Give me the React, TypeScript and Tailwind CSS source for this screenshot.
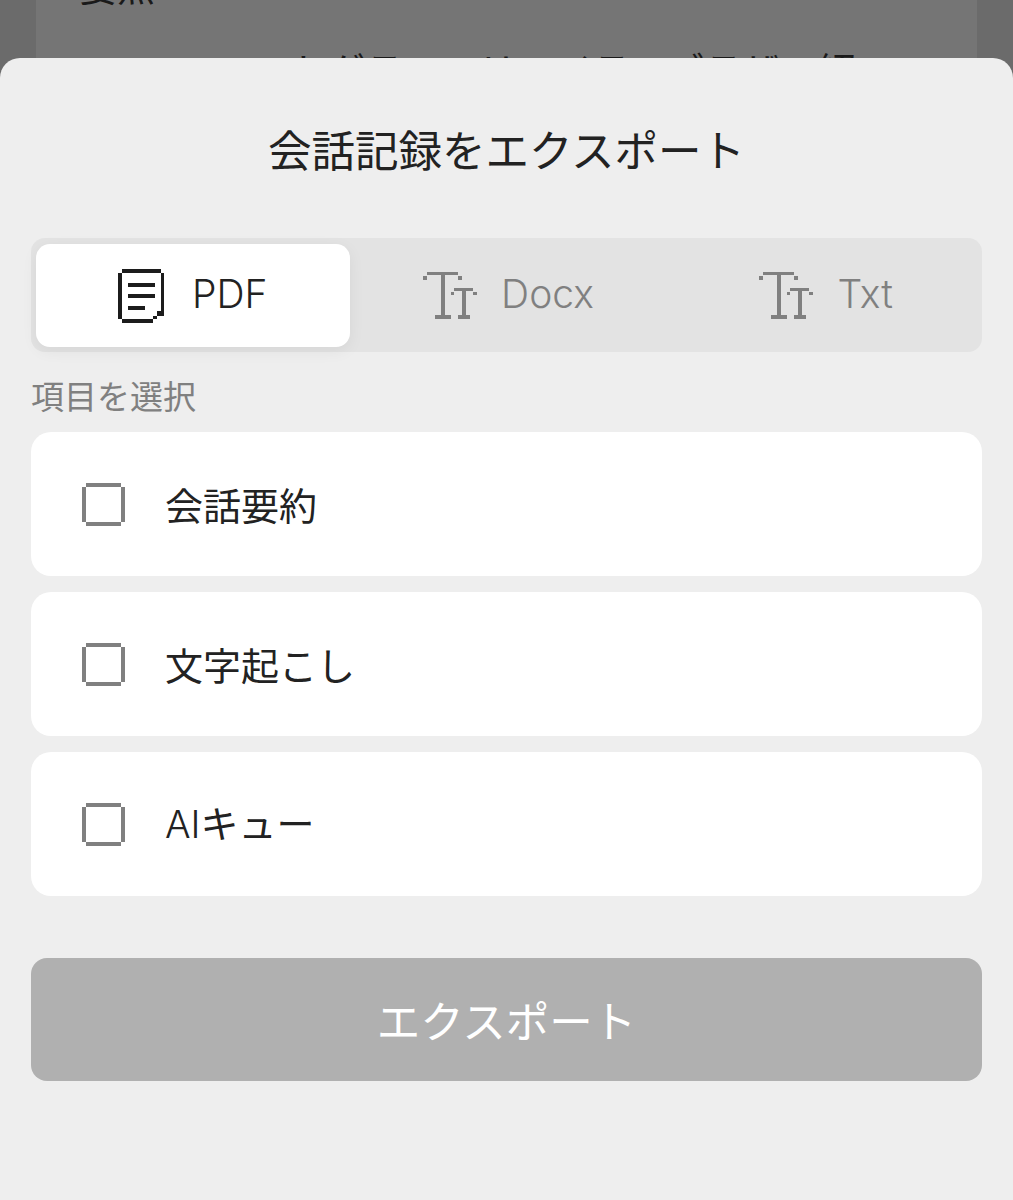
const FONT = "font-['Inter','Noto_Sans_CJK_JP',sans-serif]";

const DocIcon = () => (
  <svg width="46" height="54" viewBox="0 0 46 54" fill="#1c1c1c" shapeRendering="crispEdges" className="shrink-0">
    <rect x="4" y="0" width="39" height="4" />
    <rect x="0" y="4" width="4" height="46" />
    <rect x="43" y="4" width="3" height="38" />
    <rect x="4" y="50" width="31" height="4" />
    <rect x="35" y="47" width="4" height="3" />
    <rect x="39" y="42" width="7" height="5" />
    <rect x="10" y="14" width="27" height="4" />
    <rect x="10" y="25" width="27" height="4" />
    <rect x="10" y="37" width="17" height="4" />
  </svg>
);

const TextIcon = () => (
  <svg width="54" height="47" viewBox="0 0 54 47" fill="#808080" shapeRendering="crispEdges" className="shrink-0">
    <rect x="4" y="0" width="31" height="3" />
    <rect x="0" y="4" width="4" height="4" />
    <rect x="35" y="4" width="4" height="4" />
    <rect x="18" y="3" width="4" height="40" />
    <rect x="12" y="43" width="16" height="4" />
    <rect x="31" y="16" width="19" height="3" />
    <rect x="28" y="20" width="3" height="3" />
    <rect x="50" y="20" width="4" height="3" />
    <rect x="39" y="19" width="4" height="24" />
    <rect x="35" y="43" width="12" height="4" />
  </svg>
);

const CheckBox = () => (
  <svg width="43" height="43" viewBox="0 0 43 43" fill="#808080" shapeRendering="crispEdges" className="shrink-0">
    <rect x="4" y="0" width="35" height="4" />
    <rect x="0" y="4" width="4" height="35" />
    <rect x="39" y="4" width="4" height="35" />
    <rect x="4" y="39" width="35" height="4" />
  </svg>
);

export default function App() {
  return (
    <div className={`${FONT} w-[1013px] h-[1200px] overflow-hidden bg-[#6b6b6b] flex flex-col`}>
      {/* page behind the sheet */}
      <div className="h-[58px] shrink-0 overflow-hidden px-[36px]">
        <div className="h-full bg-[#757575] text-[#1a1a1a] overflow-hidden">
          <div className="text-[38px] leading-[50px] pl-[43px] -mt-[38px]">要点</div>
          <div className="text-[38px] leading-[50px] pl-[139px] mt-[34px] whitespace-nowrap">エコートグラフィリーイラーブラザの紹</div>
        </div>
      </div>

      {/* export sheet */}
      <div className="flex-1 bg-[#eeeeee] rounded-t-[20px] px-[31px]">
        <h1 className="text-center text-[43.5px] leading-[60px] text-[#222222] mt-[63px]">会話記録をエクスポート</h1>

        <div className="mt-[57px] h-[114px] bg-[#e3e3e3] rounded-[14px] pl-[5px] pr-[5px] pt-[6px] pb-[5px] grid grid-cols-3">
          <div className="bg-white rounded-[14px] shadow-[0_4px_16px_rgba(0,0,0,0.06)] flex items-center justify-center gap-[28px] text-[39px] font-light text-[#222222]">
            <DocIcon />
            <span className="pb-[3px]">PDF</span>
          </div>
          <div className="flex items-center justify-center gap-[24px] pl-[4px] text-[39px] font-light text-[#808080]">
            <TextIcon />
            <span className="pb-[3px]">Docx</span>
          </div>
          <div className="flex items-center justify-center gap-[24px] pl-[12px] text-[39px] font-light text-[#808080]">
            <TextIcon />
            <span className="pb-[3px]">Txt</span>
          </div>
        </div>

        <div className="mt-[22px] text-[33px] leading-[46px] text-[#808080]">項目を選択</div>

        <div className="mt-[12px] flex flex-col gap-[16px]">
          <div className="h-[144px] bg-white rounded-[20px] flex items-center pl-[51px] gap-[40px]">
            <CheckBox />
            <span className="text-[38px] text-[#222222] pt-[4px]">会話要約</span>
          </div>
          <div className="h-[144px] bg-white rounded-[20px] flex items-center pl-[51px] gap-[40px]">
            <CheckBox />
            <span className="text-[38px] text-[#222222] pt-[4px]">文字起こし</span>
          </div>
          <div className="h-[144px] bg-white rounded-[20px] flex items-center pl-[51px] gap-[40px]">
            <CheckBox />
            <span className="text-[38px] text-[#222222]"><span className="font-light">AI</span>キュー</span>
          </div>
        </div>

        <button className="mt-[62px] w-full h-[123px] bg-[#b0b0b0] rounded-[16px] text-[43.5px] text-white pt-[6px]">エクスポート</button>
      </div>
    </div>
  );
}
